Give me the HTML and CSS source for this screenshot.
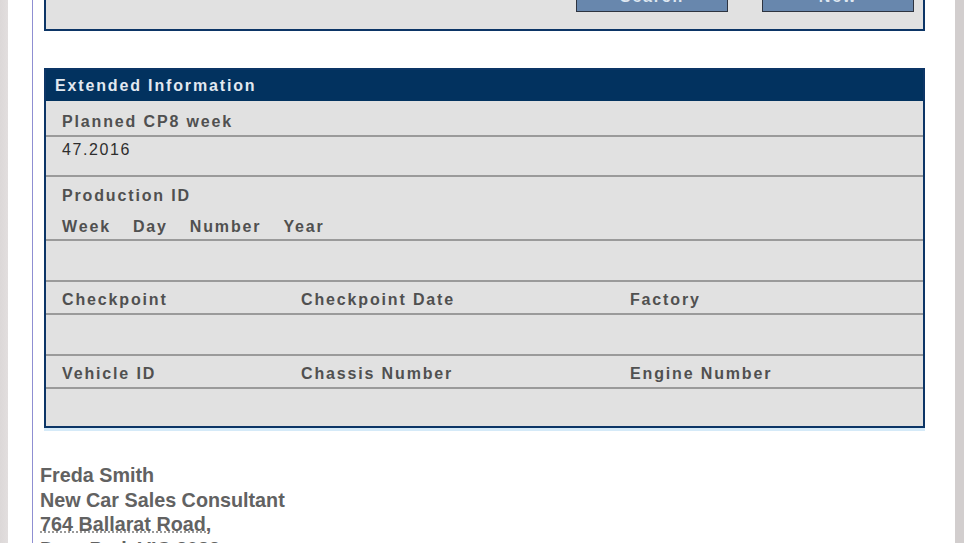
FILE: index.html
```html
<!DOCTYPE html>
<html lang="en">
<head>
    <meta charset="UTF-8">
    <meta name="viewport" content="width=device-width, initial-scale=1.0">
    <title>Vehicle Order Details</title>
    <link rel="stylesheet" href="styles.css">
</head>
<body>

    <div class="frame">
        <div class="content">

            <!-- search box, scrolled mostly out of view -->
            <div class="panel search-panel">
                <div class="button-row">
                    <button type="button" class="btn">Search</button>
                    <button type="button" class="btn">New</button>
                </div>
            </div>

            <div class="panel info-panel">
                <h3 class="panel-title">Extended Information</h3>

                <div class="row label-row first">
                    <span class="label">Planned CP8 week</span>
                </div>
                <div class="row value-row">
                    <span class="value">47.2016</span>
                </div>

                <div class="row prod-row">
                    <span class="label">Production ID</span>
                    <div class="prod-parts">
                        <span class="label">Week</span>
                        <span class="label">Day</span>
                        <span class="label">Number</span>
                        <span class="label">Year</span>
                    </div>
                </div>
                <div class="row empty-row"></div>

                <div class="row label-row cols">
                    <span class="label">Checkpoint</span>
                    <span class="label">Checkpoint Date</span>
                    <span class="label">Factory</span>
                </div>
                <div class="row empty-row"></div>

                <div class="row label-row cols">
                    <span class="label">Vehicle ID</span>
                    <span class="label">Chassis Number</span>
                    <span class="label">Engine Number</span>
                </div>
                <div class="row empty-row last"></div>
            </div>

            <div class="signature">
                <div>Freda Smith</div>
                <div>New Car Sales Consultant</div>
                <div><a class="address" href="#">764 Ballarat Road,</a></div>
                <div><a class="address" href="#">Deer Park VIC 3023</a></div>
            </div>

        </div>
    </div>

</body>
</html>
```

FILE: styles.css
```css
body {
    margin: 0;
    font-family: "Liberation Sans", Arial, sans-serif;
    background: linear-gradient(to right, #dcd8d8 0, #e2dede 8px, #d2cece 955px);
    height: 543px;
    overflow: hidden;
}

.frame {
    display: flow-root;
    margin: 0 9px 0 8px;
    background-color: #fff;
    height: 100%;
}

.content {
    display: flow-root;
    margin-left: 24px;
    height: 100%;
    border-left: 1px solid #8f8fd2;
}

.panel {
    margin-left: 11px;
    width: 881px;
    box-sizing: border-box;
    border: 2px solid #0c3566;
    background-color: #e1e1e1;
}

/* top box is cut off by the scroll position */
.search-panel {
    margin-top: -30px;
    padding: 10px 9px 17px 0;
}

.button-row {
    display: flex;
    justify-content: flex-end;
    gap: 34px;
}

.btn {
    width: 152px;
    height: 30px;
    padding: 0;
    font-family: inherit;
    font-size: 16px;
    font-weight: bold;
    letter-spacing: 1.8px;
    color: #dfe7f1;
    background-color: #6887ad;
    border: 1px solid #2e3440;
}

.info-panel {
    margin-top: 37px;
    box-shadow: 0 3px 0 #d5eaf8;
}

.panel-title {
    margin: 0;
    padding: 7px 9px 6px;
    font-size: 16px;
    line-height: 18px;
    letter-spacing: 1.85px;
    color: #e2e9f1;
    background-color: #02325f;
}

.row {
    border-top: 2px solid #9a9a9a;
    padding: 0 16px;
}

.row.first {
    border-top: none;
}

.label, .value {
    font-size: 16px;
    line-height: 18px;
}

.label {
    font-weight: bold;
    letter-spacing: 1.85px;
    color: #505050;
}

.value {
    letter-spacing: 1.6px;
    color: #2e2e2e;
}

.label-row {
    padding-top: 9px;
    padding-bottom: 4px;
}

.label-row.first {
    padding-top: 12px;
}

.cols {
    display: grid;
    grid-template-columns: 239px 329px 1fr;
}

.value-row {
    padding-top: 4px;
    padding-bottom: 16px;
}

.prod-row {
    display: flex;
    flex-direction: column;
    align-items: flex-start;
    gap: 13px;
    padding-top: 10px;
    padding-bottom: 3px;
}

.prod-parts {
    display: flex;
    gap: 22px;
}

.empty-row {
    height: 39px;
}

.empty-row.last {
    height: 37px;
}

.signature {
    margin-top: 35px;
    padding-left: 7px;
    font-size: 19.75px;
    line-height: 24.5px;
    font-weight: bold;
    color: #626262;
}

.address {
    color: #626262;
    text-decoration: underline dotted #9a9a9a;
}
```
